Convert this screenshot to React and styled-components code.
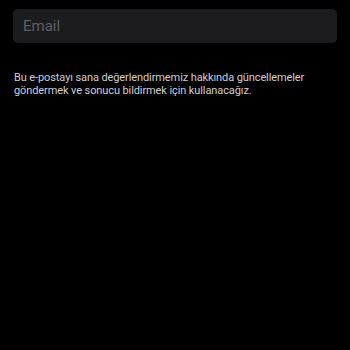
import React from "react";
import styled, { createGlobalStyle } from "styled-components";

const Global = createGlobalStyle`
  html, body { margin: 0; padding: 0; background: #000; }
  body { font-family: Roboto, "Noto Sans", sans-serif; -webkit-font-smoothing: antialiased; }
`;

const Page = styled.div`
  width: 350px;
  height: 350px;
  background: #000;
  padding: 9px 13px 0 13px;
  box-sizing: border-box;
  display: flex;
  flex-direction: column;
  gap: 28px;
`;

const Input = styled.input`
  box-sizing: border-box;
  width: 324px;
  height: 34px;
  border: none;
  outline: none;
  border-radius: 5px;
  background: #1c1c1e;
  color: #fff;
  padding: 0 10px;
  font-family: Roboto, "Noto Sans", sans-serif;
  font-size: 15px;
  &::placeholder { color: #5e5e62; }
`;

const Note = styled.p`
  margin: 0;
  padding-left: 1px;
  color: #cfcfd3;
  font-size: 11px;
  letter-spacing: -0.1px;
  line-height: 13px;
  max-width: 310px;
`;

export default function App() {
  return (
    <>
      <Global />
      <Page>
        <Input type="email" placeholder="Email" />
        <Note>
          Bu e-postayı sana değerlendirmemiz hakkında güncellemeler göndermek ve sonucu bildirmek için kullanacağız.
        </Note>
      </Page>
    </>
  );
}
